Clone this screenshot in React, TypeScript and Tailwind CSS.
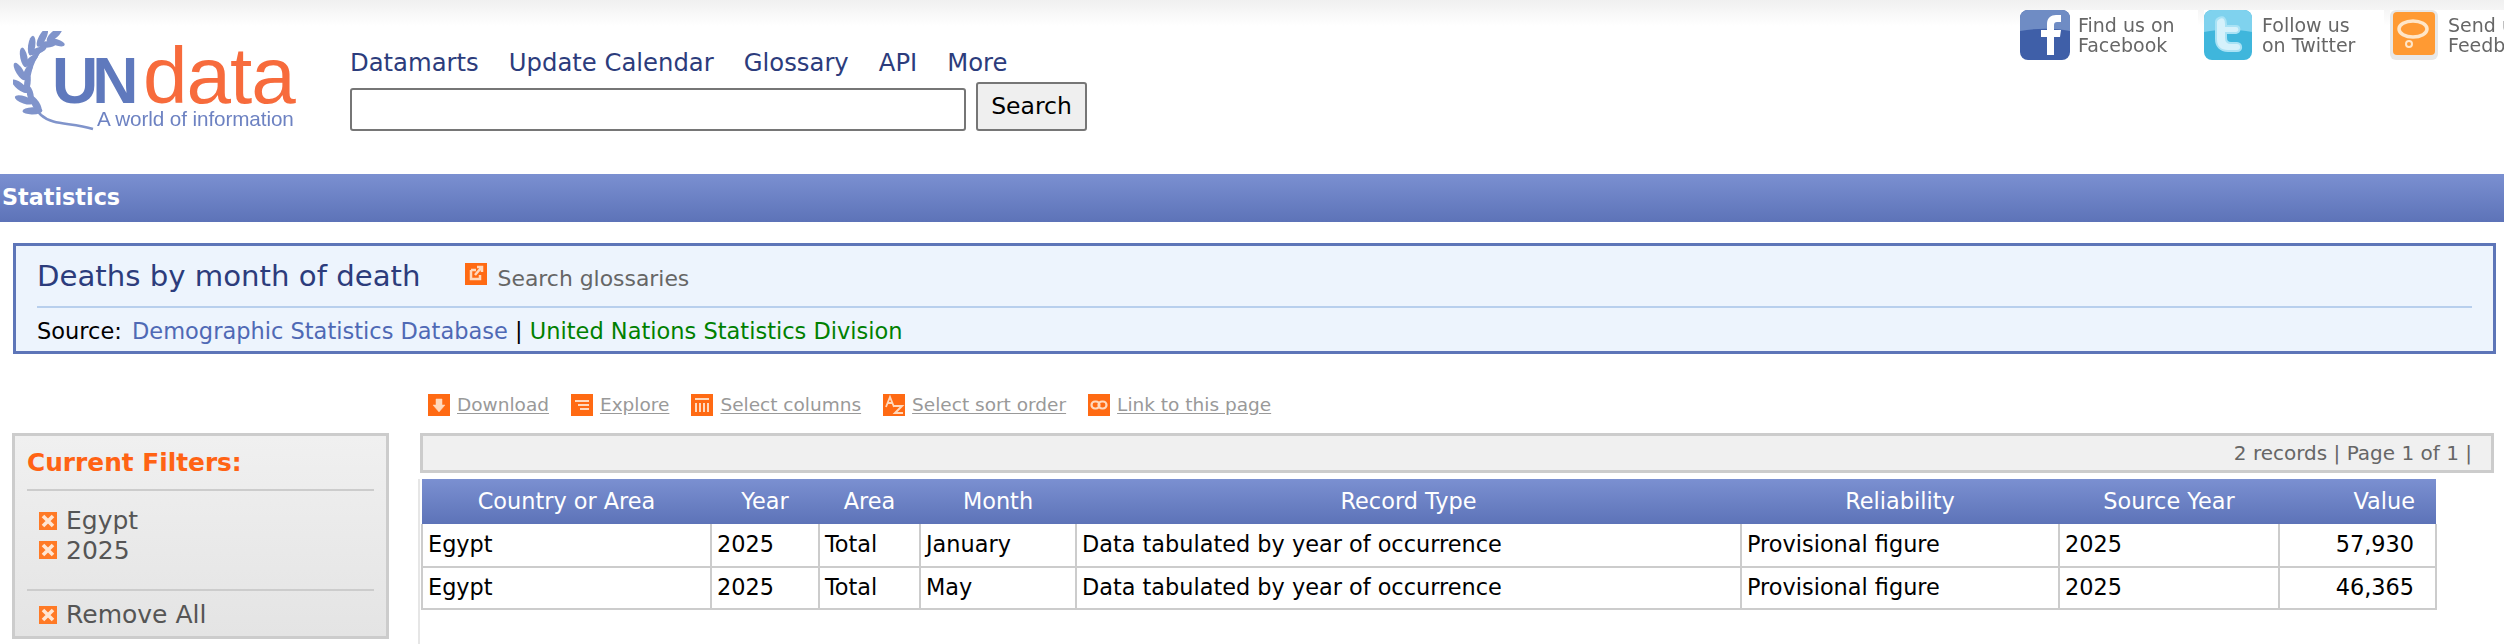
// App.tsx
const FONT = "font-['DejaVu_Sans',Verdana,sans-serif]";

const columns = [
  { label: "Country or Area", width: "w-[289px]" },
  { label: "Year", width: "w-[108px]" },
  { label: "Area", width: "w-[101px]" },
  { label: "Month", width: "w-[156px]" },
  { label: "Record Type", width: "w-[665px]" },
  { label: "Reliability", width: "w-[318px]" },
  { label: "Source Year", width: "w-[220px]" },
  { label: "Value", width: "w-[157px]", right: true },
];

const rows = [
  ["Egypt", "2025", "Total", "January", "Data tabulated by year of occurrence", "Provisional figure", "2025", "57,930"],
  ["Egypt", "2025", "Total", "May", "Data tabulated by year of occurrence", "Provisional figure", "2025", "46,365"],
];

// wreath leaves, angles in degrees around the wreath centre
const leafAngles = [258, 238, 218, 198, 178, 158, 138, 118];

function Logo() {
  return (
    <svg width="300" height="110" viewBox="0 0 300 110" className="shrink-0 blur-[0.6px]">
      <g fill="#8094cb">
        {leafAngles.map((a) => {
          const rad = (a * Math.PI) / 180;
          const x = 42 + 31 * Math.cos(rad);
          const y = 46 + 38 * Math.sin(rad);
          return (
            <g key={a}>
              <ellipse cx={x} cy={y} rx="10" ry="3.6" transform={`rotate(${a + 60} ${x} ${y}) translate(8 0)`} />
              <ellipse cx={x} cy={y} rx="9" ry="3.2" transform={`rotate(${a + 120} ${x} ${y}) translate(8 0)`} />
            </g>
          );
        })}
      </g>
      <path d="M38 9C16 26 6 62 28 84c12 11 30 7 52 14" fill="none" stroke="#8094cb" strokeWidth="2.5" />
      <text x="39" y="72" fontFamily="Liberation Sans" fontWeight="700" fontSize="64" fill="#5f79bd" letterSpacing="-6">UN</text>
      <text x="130" y="72" fontFamily="Liberation Sans" fontSize="80" fill="#f76b3c" letterSpacing="-1">data</text>
      <text x="84" y="95" fontFamily="Liberation Sans" fontSize="20.7" fill="#6d82c2" letterSpacing="-0.1">A world of information</text>
    </svg>
  );
}

function Social({ icon, lines, className }: { icon: React.ReactNode; lines: string[]; className: string }) {
  return (
    <div className={`flex shrink-0 items-start bg-white pb-1 ${className}`}>
      {icon}
      <div className="pt-[5px] text-[19px] leading-[20px] text-[#666] whitespace-nowrap blur-[0.4px]">
        {lines.map((l) => (
          <div key={l}>{l}</div>
        ))}
      </div>
    </div>
  );
}

function Square({ children }: { children: React.ReactNode }) {
  return (
    <svg width="22" height="22" viewBox="0 0 22 22" className="shrink-0">
      <rect width="22" height="22" fill="#ff6a13" />
      <g fill="#ffd9bd" stroke="#ffd9bd">
        {children}
      </g>
    </svg>
  );
}

function CloseBox() {
  return (
    <svg width="18" height="18" viewBox="0 0 18 18" className="shrink-0">
      <rect width="18" height="18" fill="#ff7a26" />
      <path d="M4 4l10 10M14 4L4 14" stroke="#ffe6d3" strokeWidth="3.6" />
    </svg>
  );
}

function ActionLink({ icon, label }: { icon: React.ReactNode; label: string }) {
  return (
    <div className="flex h-[22px] items-center gap-[7px]">
      {icon}
      <a className="text-[18.5px] text-[#999] underline underline-offset-2">{label}</a>
    </div>
  );
}

export default function App() {
  return (
    <div className={`${FONT} h-[644px] w-[2504px] overflow-hidden bg-white`}>
      <header className="flex h-[174px] bg-gradient-to-b from-[#f0f0f0] to-white to-[26px]">
        <div className="pl-[13px] pt-[31px]">
          <Logo />
        </div>
        <div className="ml-[37px] w-[737px] shrink-0 pt-[44px]">
          <nav className="flex h-[38px] items-center gap-[30px] text-[24.3px] text-[#2c3c7c]">
            <a>Datamarts</a>
            <a>Update Calendar</a>
            <a>Glossary</a>
            <a>API</a>
            <a>More</a>
          </nav>
          <div className="flex items-end gap-[10px]">
            <input className="h-[43px] w-[616px] rounded-[3px] border-2 border-[#767676] bg-white" />
            <button className="h-[49px] w-[111px] rounded-[3px] border-2 border-[#767676] bg-[#efefef] text-[23.5px] text-black">
              Search
            </button>
          </div>
        </div>
        <div className="ml-[933px] flex gap-[6px] self-start pt-[10px]">
          <Social
            className="w-[178px] gap-2"
            lines={["Find us on", "Facebook"]}
            icon={
              <svg width="50" height="50" viewBox="0 0 50 50" className="shrink-0">
                <rect width="50" height="50" rx="8" fill="#3f5fa8" />
                <path d="M0 8a8 8 0 0 1 8-8h34a8 8 0 0 1 8 8v13c-16-3-34-3-50 0z" fill="#6f8cc4" />
                <path d="M27 45V27h-6v-7h6v-6c0-6 4-9 9-9h5v7h-4c-2 0-3 1-3 3v5h7l-1 7h-6v18z" fill="#fff" />
              </svg>
            }
          />
          <Social
            className="w-[180px] gap-[10px]"
            lines={["Follow us", "on Twitter"]}
            icon={
              <svg width="48" height="50" viewBox="0 0 48 50" className="shrink-0">
                <rect width="48" height="50" rx="8" fill="#3fb6dc" />
                <path d="M0 8a8 8 0 0 1 8-8h32a8 8 0 0 1 8 8v14c-16-3-32-3-48 0z" fill="#7fd2ee" />
                <path
                  d="M15 8c5-2 7 1 7 6v2h10c4 0 5 6 0 7H22v5c0 4 2 5 5 5h6c5 0 6 8 0 8H24c-8 0-12-5-12-12V12c0-2 1-3 3-4z"
                  fill="#d5f1fb"
                  stroke="#a8e2f5"
                  strokeWidth="2"
                />
              </svg>
            }
          />
          <Social
            className="w-[200px] gap-[10px]"
            lines={["Send us", "Feedback"]}
            icon={
              <svg width="48" height="50" viewBox="0 0 48 50" className="shrink-0">
                <rect width="48" height="50" rx="6" fill="#e8e8e8" />
                <rect x="3" y="2" width="42" height="43" rx="4" fill="#ff9a33" />
                <ellipse cx="23" cy="19" rx="14" ry="8" fill="none" stroke="#ffe6c8" strokeWidth="3.5" />
                <circle cx="19" cy="34" r="3" fill="none" stroke="#ffe6c8" strokeWidth="2" />
              </svg>
            }
          />
        </div>
      </header>

      <div className="flex h-[48px] items-center bg-gradient-to-b from-[#7b90d1] to-[#5d73b8] pl-[2px] text-[22.3px] font-bold text-white">
        Statistics
      </div>

      <section className="ml-[13px] mr-[8px] mt-[21px] h-[111px] border-[3px] border-[#5d75b8] bg-[#edf4fd] pl-[21px] pr-[21px]">
        <div className="flex h-[62px] items-center border-b-2 border-[#b8cfed] pt-[2px]">
          <h1 className="text-[29.2px] text-[#2c3c7c]">Deaths by month of death</h1>
          <div className="ml-[44px] flex items-start gap-[11px]">
            <Square>
              <path d="M6 7h5M6 7v9h9v-4" fill="none" strokeWidth="2.5" />
              <path d="M10 12l6-7M12 4h5v5" fill="none" strokeWidth="2.5" />
            </Square>
            <span className="pt-[3px] text-[21.9px] leading-[26px] text-[#666]">Search glossaries</span>
          </div>
        </div>
        <p className="pt-[9px] text-[22.5px] leading-[28px] text-black">
          <span className="mr-[3px]">Source:</span> <a className="text-[#4f69b5]">Demographic Statistics Database</a> |{" "}
          <a className="text-[#008000]">United Nations Statistics Division</a>
        </p>
      </section>

      <div className="mt-[40px] flex gap-[22px] pl-[428px]">
        <ActionLink
          label="Download"
          icon={
            <Square>
              <path d="M8 5h6v6h3l-6 7-6-7h3z" strokeWidth="0.5" />
            </Square>
          }
        />
        <ActionLink
          label="Explore"
          icon={
            <Square>
              <path d="M4 7h14M7 11h11M9 15h9" fill="none" strokeWidth="2.2" />
            </Square>
          }
        />
        <ActionLink
          label="Select columns"
          icon={
            <Square>
              <path d="M4 5h14" fill="none" strokeWidth="2" />
              <path d="M5 9v9M9 9v9M13 9v9M17 9v9" fill="none" strokeWidth="2" />
            </Square>
          }
        />
        <ActionLink
          label="Select sort order"
          icon={
            <Square>
              <path d="M3 13l4-10 4 10M5 9h4" fill="none" strokeWidth="1.8" />
              <path d="M11 12h8l-7 7h8" fill="none" strokeWidth="2" />
            </Square>
          }
        />
        <ActionLink
          label="Link to this page"
          icon={
            <Square>
              <rect x="3.5" y="7.5" width="8" height="7" rx="3.5" fill="none" strokeWidth="2.2" />
              <rect x="10.5" y="7.5" width="8" height="7" rx="3.5" fill="none" strokeWidth="2.2" />
            </Square>
          }
        />
      </div>

      <div className="mt-[17px] flex">
        <aside className="ml-[12px] h-[206px] w-[377px] shrink-0 border-[3px] border-[#ccc] bg-gradient-to-b from-[#f0f0f0] to-[#e4e4e4] px-[12px]">
          <h2 className="flex h-[55px] items-center border-b-2 border-[#ccc] text-[24.8px] font-bold text-[#ff6314]">
            Current Filters:
          </h2>
          <div className="h-[100px] border-b-2 border-[#ccc] pl-[12px] pt-[15px] text-[25px] leading-[29.5px] text-[#555]">
            <div className="flex items-center gap-[9px]">
              <CloseBox />
              Egypt
            </div>
            <div className="flex items-center gap-[9px]">
              <CloseBox />
              2025
            </div>
          </div>
          <div className="flex items-center gap-[9px] pl-[12px] pt-[9px] text-[25px] leading-[29px] text-[#555]">
            <CloseBox />
            Remove All
          </div>
        </aside>

        <main className="ml-[31px] min-w-0 flex-1 pr-[10px]">
          <div className="flex h-[40px] items-center justify-end border-[3px] border-[#ccc] bg-[#f0f0f0] pr-[19px] text-[20px] text-[#666]">
            2 records | Page 1 of 1 |
          </div>
          <div className="-ml-[2px] mt-[6px] h-[171px] border-l-2 border-[#e6e6e6] pl-[1px]">
            <table className="w-[2014px] table-fixed border-collapse">
              <thead>
                <tr className="h-[45px] bg-gradient-to-b from-[#7b90d1] to-[#5d73b8] text-white">
                  {columns.map((c) => (
                    <th
                      key={c.label}
                      className={`${c.width} text-[22.4px] font-normal ${c.right ? "pr-[21px] text-right" : "text-center"}`}
                    >
                      {c.label}
                    </th>
                  ))}
                </tr>
              </thead>
              <tbody>
                {rows.map((row, i) => (
                  <tr key={i} className="h-[42.5px]">
                    {row.map((cell, j) => (
                      <td
                        key={j}
                        className={`border-2 border-t-0 border-[#ccc] pl-[5px] pr-[5px] text-[22.4px] text-black ${j === 7 ? "pr-[21px] text-right" : ""}`}
                      >
                        {cell}
                      </td>
                    ))}
                  </tr>
                ))}
              </tbody>
            </table>
          </div>
        </main>
      </div>
    </div>
  );
}
